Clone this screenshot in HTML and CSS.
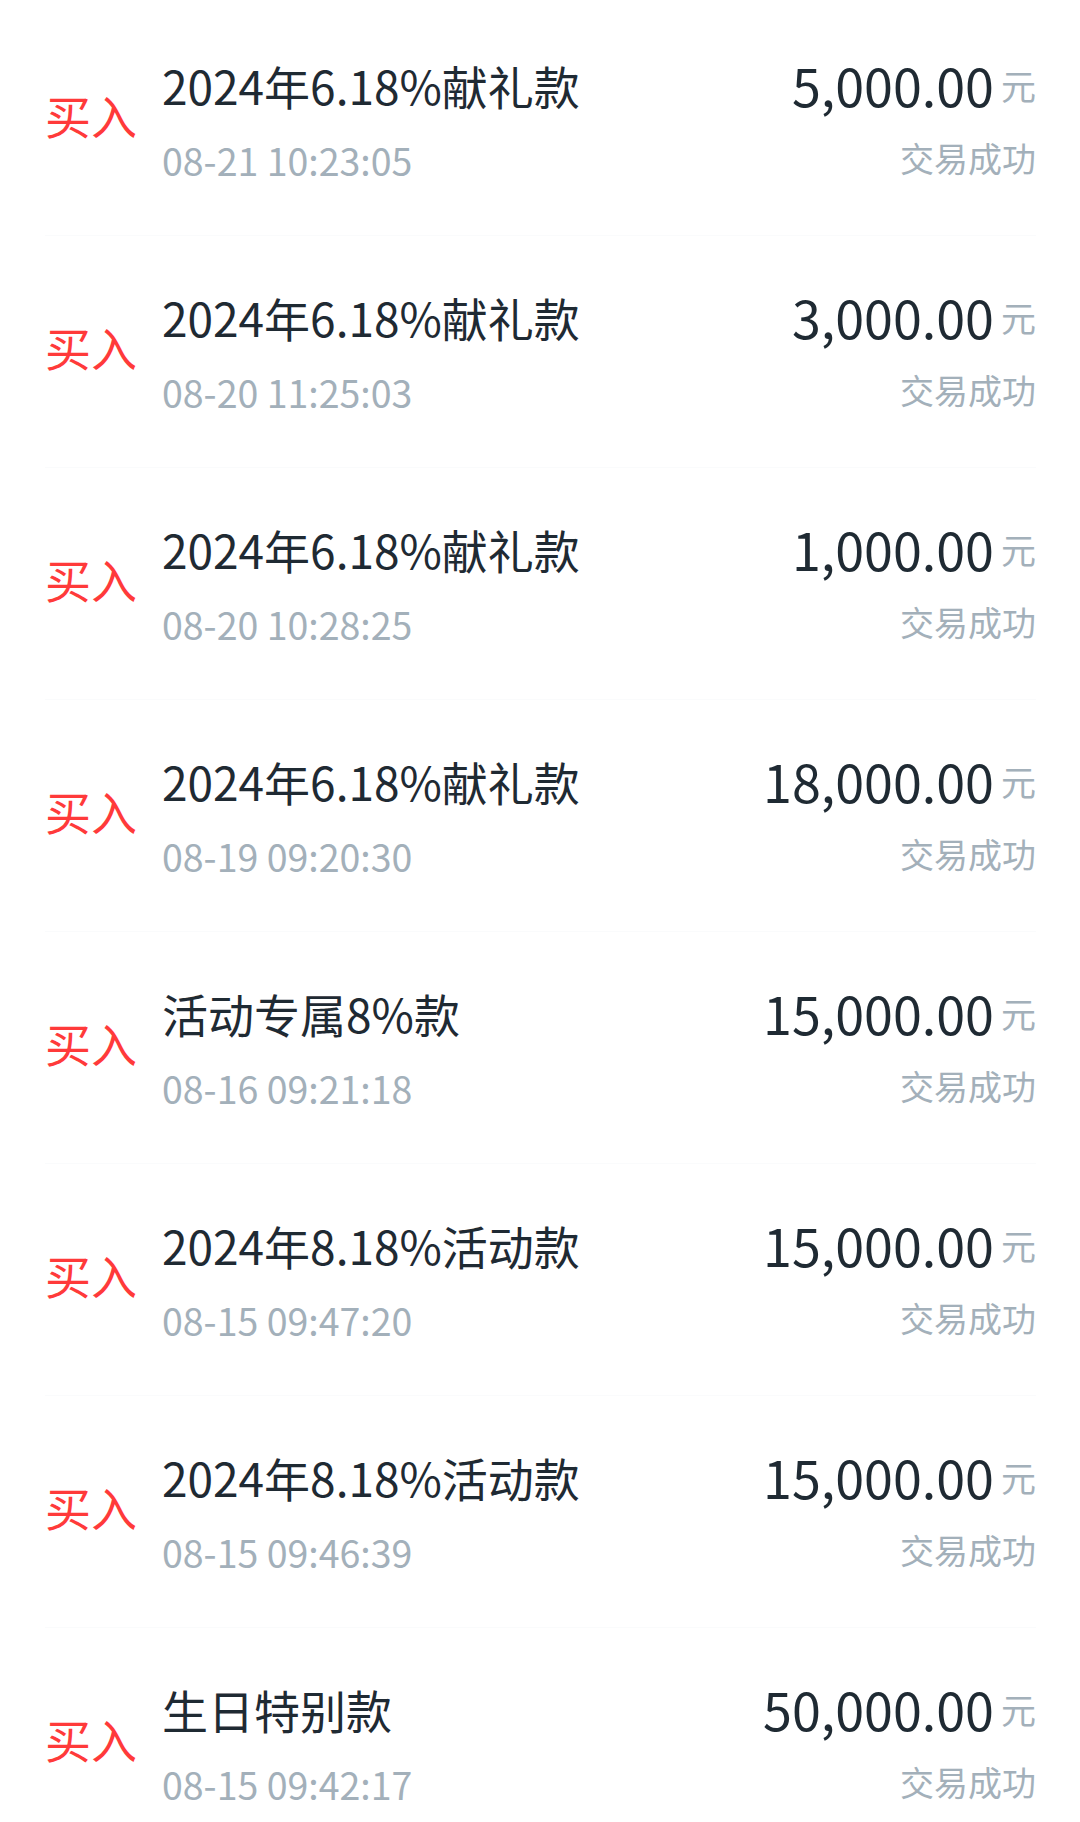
FILE: index.html
```html
<!DOCTYPE html>
<html lang="zh-CN">
<head>
	<meta charset="UTF-8">
	<title>交易记录</title>
	<link rel="stylesheet" href="styles.css">
</head>
<body>
	<div class="trade-list">
		<div class="trade-item">
			<div class="trade-type">买入</div>
			<div class="trade-info">
				<div class="trade-name">2024年6.18%献礼款</div>
				<div class="trade-time">08-21 10:23:05</div>
			</div>
			<div class="trade-money">
				<div class="trade-amount"><span class="num">5,000.00</span><span class="unit">元</span></div>
				<div class="trade-status">交易成功</div>
			</div>
		</div>
		<div class="trade-item">
			<div class="trade-type">买入</div>
			<div class="trade-info">
				<div class="trade-name">2024年6.18%献礼款</div>
				<div class="trade-time">08-20 11:25:03</div>
			</div>
			<div class="trade-money">
				<div class="trade-amount"><span class="num">3,000.00</span><span class="unit">元</span></div>
				<div class="trade-status">交易成功</div>
			</div>
		</div>
		<div class="trade-item">
			<div class="trade-type">买入</div>
			<div class="trade-info">
				<div class="trade-name">2024年6.18%献礼款</div>
				<div class="trade-time">08-20 10:28:25</div>
			</div>
			<div class="trade-money">
				<div class="trade-amount"><span class="num">1,000.00</span><span class="unit">元</span></div>
				<div class="trade-status">交易成功</div>
			</div>
		</div>
		<div class="trade-item">
			<div class="trade-type">买入</div>
			<div class="trade-info">
				<div class="trade-name">2024年6.18%献礼款</div>
				<div class="trade-time">08-19 09:20:30</div>
			</div>
			<div class="trade-money">
				<div class="trade-amount"><span class="num">18,000.00</span><span class="unit">元</span></div>
				<div class="trade-status">交易成功</div>
			</div>
		</div>
		<div class="trade-item">
			<div class="trade-type">买入</div>
			<div class="trade-info">
				<div class="trade-name">活动专属8%款</div>
				<div class="trade-time">08-16 09:21:18</div>
			</div>
			<div class="trade-money">
				<div class="trade-amount"><span class="num">15,000.00</span><span class="unit">元</span></div>
				<div class="trade-status">交易成功</div>
			</div>
		</div>
		<div class="trade-item">
			<div class="trade-type">买入</div>
			<div class="trade-info">
				<div class="trade-name">2024年8.18%活动款</div>
				<div class="trade-time">08-15 09:47:20</div>
			</div>
			<div class="trade-money">
				<div class="trade-amount"><span class="num">15,000.00</span><span class="unit">元</span></div>
				<div class="trade-status">交易成功</div>
			</div>
		</div>
		<div class="trade-item">
			<div class="trade-type">买入</div>
			<div class="trade-info">
				<div class="trade-name">2024年8.18%活动款</div>
				<div class="trade-time">08-15 09:46:39</div>
			</div>
			<div class="trade-money">
				<div class="trade-amount"><span class="num">15,000.00</span><span class="unit">元</span></div>
				<div class="trade-status">交易成功</div>
			</div>
		</div>
		<div class="trade-item">
			<div class="trade-type">买入</div>
			<div class="trade-info">
				<div class="trade-name">生日特别款</div>
				<div class="trade-time">08-15 09:42:17</div>
			</div>
			<div class="trade-money">
				<div class="trade-amount"><span class="num">50,000.00</span><span class="unit">元</span></div>
				<div class="trade-status">交易成功</div>
			</div>
		</div>
	</div>
</body>
</html>
```

FILE: styles.css
```css
*{
	margin: 0;
	padding: 0;
	box-sizing: border-box;
}
body{
	background: #fff;
	font-family: "Noto Sans CJK SC", "Noto Sans", sans-serif;
}
.trade-list{
	padding-top: 4px;
}
.trade-item{
	display: flex;
	align-items: center;
	height: 232px;
	margin: 0 44px 0 45px;
	border-bottom: 1px solid #fafbfc;
}
.trade-type{
	width: 117px;
	margin-bottom: 12px;
	font-size: 46px;
	line-height: 52px;
	color: #ff3a3a;
}
.trade-info{
	flex: 1;
	display: flex;
	flex-direction: column;
	gap: 24px;
}
.trade-name{
	font-size: 46px;
	line-height: 56px;
	color: #1f2a33;
}
.trade-time{
	font-size: 37.5px;
	line-height: 46px;
	color: #a3b0ba;
}
.trade-money{
	display: flex;
	flex-direction: column;
	align-items: flex-end;
	gap: 24px;
	margin-top: -6px;
}
.trade-amount{
	display: flex;
	align-items: center;
	height: 58px;
}
.trade-amount .num{
	font-size: 52px;
	line-height: 58px;
	color: #1f2a33;
}
.trade-amount .unit{
	margin-left: 7px;
	font-size: 35px;
	color: #a3b0ba;
}
.trade-status{
	font-size: 34px;
	line-height: 40px;
	color: #a3b0ba;
}
```
